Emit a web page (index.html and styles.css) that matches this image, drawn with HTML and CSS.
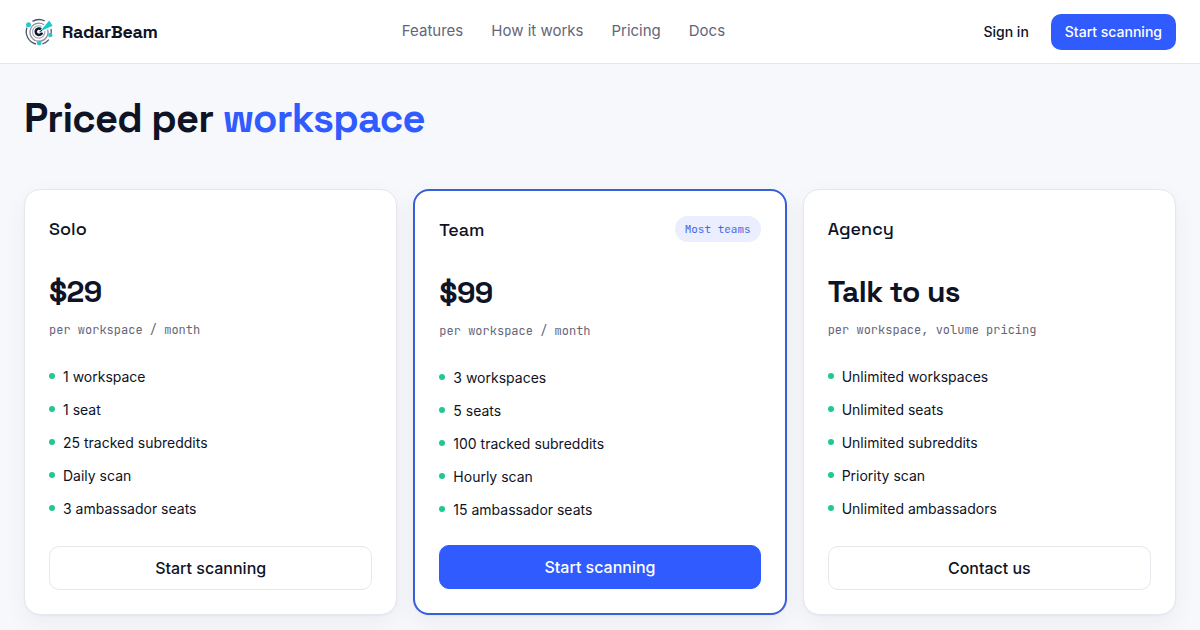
FILE: index.html
```html
<!DOCTYPE html>
<html lang="en">
<head>
  <meta charset="UTF-8">
  <meta name="viewport" content="width=device-width, initial-scale=1.0">
  <title>RadarBeam - Pricing</title>
  <link rel="stylesheet" href="styles.css">
</head>
<body>
  <header class="navbar">
    <a class="brand" href="#">
      <svg class="logo" viewBox="0 0 30 30" fill="none">
        <!-- rings -->
        <path d="M8.5 4.4A12.6 12.6 0 0 1 20.8 4M27 12A12.6 12.6 0 0 1 27 17M24.8 22.6A12.6 12.6 0 0 1 18.5 26.8M12 27A12.6 12.6 0 0 1 3 10.5" stroke="#4a5268" stroke-width="1.3"/>
        <path d="M20 7.7A9 9 0 1 0 23.6 12.5" stroke="#8b91a0" stroke-width="1.3"/>
        <path d="M17.6 9.5A6.2 6.2 0 1 0 20.8 14" stroke="#a3a8b4" stroke-width="1.2"/>
        <!-- core and beam -->
        <path d="M17 12.2A3.2 3.2 0 1 0 18 15.6" stroke="#10182f" stroke-width="2.6"/>
        <path d="m16 14.4 9.2-11 3.4 5.4Z" fill="#1cc8cf"/>
        <path d="m14.6 15.4 3-2.6.6 1.2Z" fill="#10182f"/>
        <!-- blips -->
        <circle cx="4.5" cy="7.7" r="2.5" fill="#2cc5ca"/>
        <circle cx="26.3" cy="18" r="2.2" fill="#2cc5ca"/>
        <circle cx="15.1" cy="26.1" r="2.4" fill="#2cc5ca"/>
      </svg>
      <span class="brand-name">RadarBeam</span>
    </a>
    <nav class="nav-links">
      <a href="#">Features</a>
      <a href="#">How it works</a>
      <a href="#">Pricing</a>
      <a href="#">Docs</a>
    </nav>
    <div class="nav-actions">
      <a class="btn-small btn-ghost" href="#">Sign in</a>
      <a class="btn-small btn-primary" href="#">Start scanning</a>
    </div>
  </header>

  <main class="container">
    <h1>Priced per <span class="accent">workspace</span></h1>
    <div class="plans">
      <section class="card">
        <div class="card-header">
          <h2>Solo</h2>
        </div>
        <div class="price">$29</div>
        <div class="period">per workspace / month</div>
        <ul>
          <li>1 workspace</li>
          <li>1 seat</li>
          <li>25 tracked subreddits</li>
          <li>Daily scan</li>
          <li>3 ambassador seats</li>
        </ul>
        <a class="btn" href="#">Start scanning</a>
      </section>

      <section class="card featured">
        <div class="card-header">
          <h2>Team</h2>
          <span class="badge">Most teams</span>
        </div>
        <div class="price">$99</div>
        <div class="period">per workspace / month</div>
        <ul>
          <li>3 workspaces</li>
          <li>5 seats</li>
          <li>100 tracked subreddits</li>
          <li>Hourly scan</li>
          <li>15 ambassador seats</li>
        </ul>
        <a class="btn btn-primary" href="#">Start scanning</a>
      </section>

      <section class="card">
        <div class="card-header">
          <h2>Agency</h2>
        </div>
        <div class="price">Talk to us</div>
        <div class="period">per workspace, volume pricing</div>
        <ul>
          <li>Unlimited workspaces</li>
          <li>Unlimited seats</li>
          <li>Unlimited subreddits</li>
          <li>Priority scan</li>
          <li>Unlimited ambassadors</li>
        </ul>
        <a class="btn" href="#">Contact us</a>
      </section>
    </div>
  </main>
</body>
</html>
```
FILE: styles.css
```css
* {
  box-sizing: border-box;
  margin: 0;
  padding: 0;
}

body {
  height: 630px;
  overflow: hidden;
  background: #f6f8fc;
  color: #0e1325;
  font-family: "Inter", sans-serif;
}

a {
  color: inherit;
  text-decoration: none;
}

.navbar {
  display: flex;
  justify-content: space-between;
  align-items: center;
  height: 64px;
  padding: 0 24px;
  background: #fff;
  border-bottom: 1px solid #e4e7ec;
}

.brand {
  display: flex;
  align-items: center;
  gap: 8px;
}

.logo {
  width: 30px;
  height: 30px;
}

.brand-name {
  font-family: "Space Grotesk", "Inter", sans-serif;
  font-size: 18px;
  font-weight: 700;
  letter-spacing: -0.36px;
}

.nav-links {
  display: flex;
  gap: 28px;
  padding-bottom: 2px;
  color: #646579;
  font-size: 15px;
}

.nav-actions {
  display: flex;
  align-items: center;
  gap: 8px;
}

.btn-small {
  padding: 0 14px;
  border-radius: 10px;
  font-size: 14px;
  font-weight: 500;
  line-height: 36px;
}

.container {
  padding: 31px 24px 0;
}

h1 {
  height: 94px;
  font-family: "Space Grotesk", "Inter", sans-serif;
  font-size: 40px;
  font-weight: 600;
  line-height: 48px;
  letter-spacing: -0.8px;
}

.accent {
  color: #2f5bff;
}

.plans {
  display: grid;
  grid-template-columns: repeat(3, 1fr);
  gap: 16px;
}

.card {
  display: flex;
  flex-direction: column;
  height: 426px;
  padding: 24px;
  background: #fff;
  border: 1px solid #e4e7ee;
  border-radius: 16px;
  box-shadow: 0 1px 2px rgba(14, 19, 37, 0.04), 0 8px 24px rgba(14, 19, 37, 0.05);
}

.featured {
  border: 2px solid #365fd9;
}

.card-header {
  display: flex;
  justify-content: space-between;
  align-items: center;
  height: 28px;
}

h2 {
  padding-top: 1px;
  font-family: "Space Grotesk", "Inter", sans-serif;
  font-size: 18px;
  font-weight: 500;
}

.badge {
  padding: 0 10px;
  background: #eaeeff;
  color: #4268e0;
  border-radius: 14px;
  font-family: "JetBrains Mono", "Liberation Mono", monospace;
  font-size: 11px;
  line-height: 26px;
}

.price {
  margin-top: 30px;
  font-family: "Space Grotesk", "Inter", sans-serif;
  font-size: 30px;
  font-weight: 700;
  line-height: 40px;
  letter-spacing: -0.6px;
}

.period {
  margin-top: 8px;
  color: #646579;
  font-family: "JetBrains Mono", "Liberation Mono", monospace;
  font-size: 12px;
  line-height: 20px;
}

ul {
  display: flex;
  flex-direction: column;
  gap: 12px;
  margin-top: 26px;
  list-style: none;
}

li {
  display: flex;
  align-items: center;
  gap: 8px;
  font-size: 14px;
  line-height: 21px;
}

li::before {
  content: "";
  width: 6px;
  height: 6px;
  margin-bottom: 1px;
  background: #1fc990;
  border-radius: 50%;
}

.btn {
  height: 44px;
  margin-top: auto;
  border: 1px solid #e4e7ec;
  border-radius: 10px;
  font-size: 16px;
  font-weight: 500;
  line-height: 42px;
  text-align: center;
}

.btn-primary {
  background: #2f5bff;
  border-color: #2f5bff;
  color: #fff;
}
```
